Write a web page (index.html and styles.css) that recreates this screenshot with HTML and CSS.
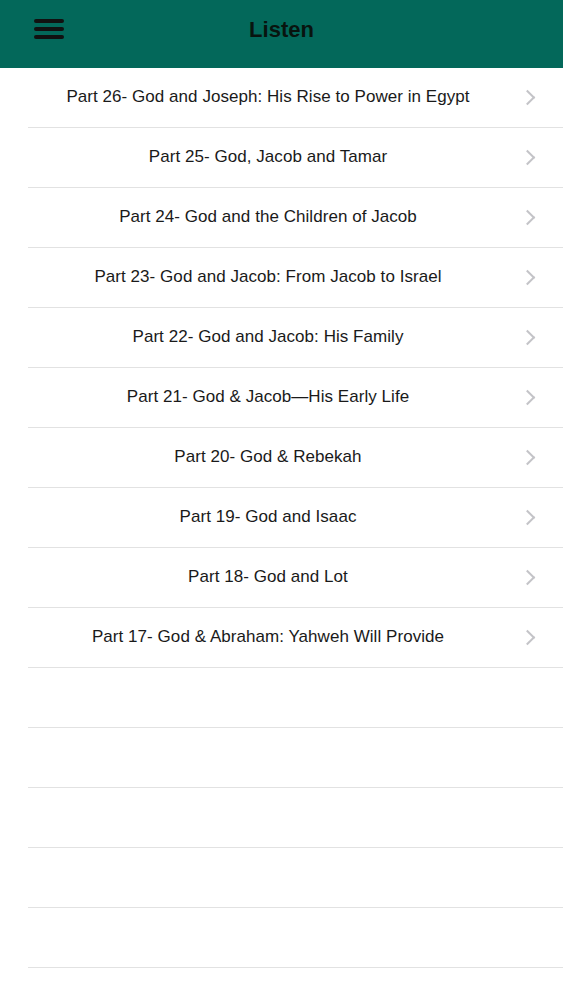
FILE: index.html
```html
<!DOCTYPE html>
<html lang="en">
<head>
    <meta charset="UTF-8">
    <meta name="viewport" content="width=device-width, initial-scale=1.0">
    <title>Listen</title>
    <link rel="stylesheet" href="styles.css">
</head>
<body>
    <header class="topbar">
        <button class="menu-btn" aria-label="Menu">
            <svg width="30" height="22" viewBox="0 0 30 22">
                <rect x="0" y="1" width="30" height="4" rx="2" fill="#111"/>
                <rect x="0" y="9" width="30" height="4" rx="2" fill="#111"/>
                <rect x="0" y="17" width="30" height="4" rx="2" fill="#111"/>
            </svg>
        </button>
        <h1 class="title">Listen</h1>
    </header>

    <ul class="episodes">
        <li class="row"><span class="label">Part 26- God and Joseph: His Rise to Power in Egypt</span><span class="chev"></span></li>
        <li class="row"><span class="label">Part 25- God, Jacob and Tamar</span><span class="chev"></span></li>
        <li class="row"><span class="label">Part 24- God and the Children of Jacob</span><span class="chev"></span></li>
        <li class="row"><span class="label">Part 23- God and Jacob: From Jacob to Israel</span><span class="chev"></span></li>
        <li class="row"><span class="label">Part 22- God and Jacob: His Family</span><span class="chev"></span></li>
        <li class="row"><span class="label">Part 21- God &amp; Jacob—His Early Life</span><span class="chev"></span></li>
        <li class="row"><span class="label">Part 20- God &amp; Rebekah</span><span class="chev"></span></li>
        <li class="row"><span class="label">Part 19- God and Isaac</span><span class="chev"></span></li>
        <li class="row"><span class="label">Part 18- God and Lot</span><span class="chev"></span></li>
        <li class="row"><span class="label">Part 17- God &amp; Abraham: Yahweh Will Provide</span><span class="chev"></span></li>
        <li class="row empty"></li>
        <li class="row empty"></li>
        <li class="row empty"></li>
        <li class="row empty"></li>
        <li class="row empty"></li>
        <li class="row empty"></li>
    </ul>
</body>
</html>
```

FILE: styles.css
```css
body {
    margin: 0;
    font-family: "Liberation Sans", Arial, sans-serif;
    background: #ffffff;
    color: #111;
}
.topbar {
    position: relative;
    height: 68px;
    background-color: #03685a;
    display: flex;
    align-items: center;
    justify-content: center;
}
.menu-btn {
    position: absolute;
    left: 34px;
    top: 18px;
    padding: 0;
    border: none;
    background: none;
    line-height: 0;
}
.title {
    margin: 0;
    font-size: 22px;
    font-weight: bold;
    color: #08140f;
    padding-bottom: 8px;
}
.episodes {
    list-style: none;
    margin: 0;
    padding: 0 0 0 28px;
}
.row {
    height: 59px;
    border-bottom: 1px solid #e2e2e2;
    display: flex;
    align-items: center;
    padding-right: 26px;
}
.label {
    flex: 1;
    text-align: center;
    font-size: 17px;
    letter-spacing: 0.05px;
    color: #1a1a1a;
    margin-left: -28px;
    margin-right: -14px;
    padding-bottom: 2px;
}
.chev {
    width: 9px;
    height: 9px;
    border-right: 2px solid #c4c4c8;
    border-top: 2px solid #c4c4c8;
    transform: rotate(45deg);
    margin-right: 4px;
}
```
